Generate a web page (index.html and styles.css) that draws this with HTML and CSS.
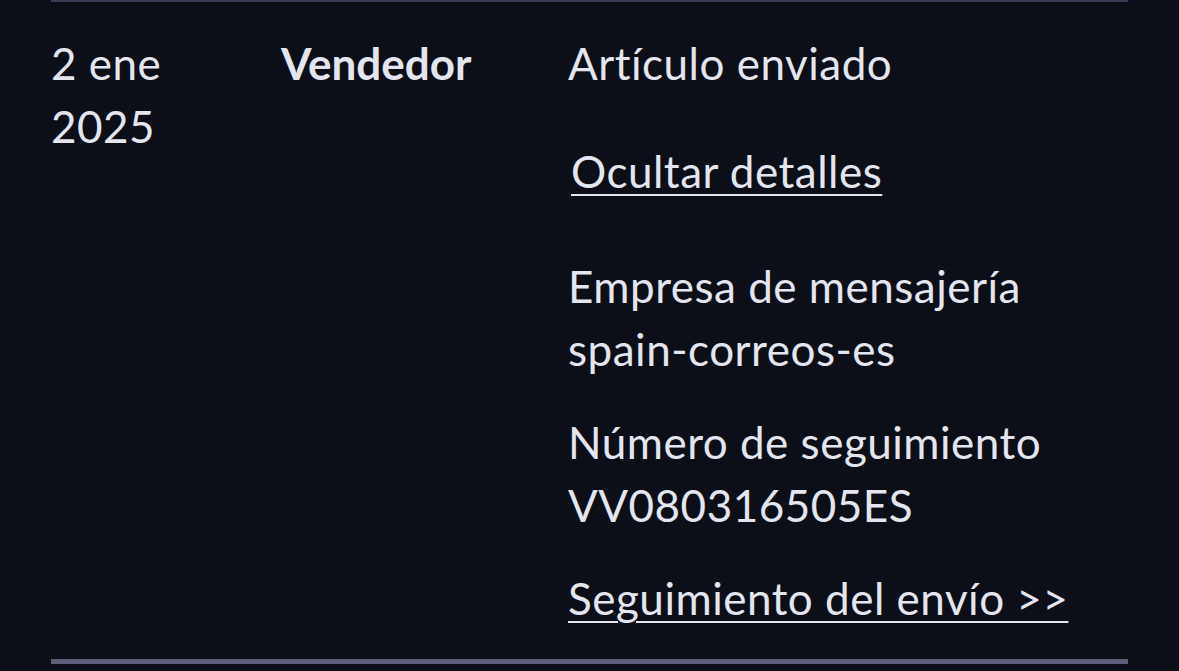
FILE: index.html
```html
<!DOCTYPE html>
<html>
<head>
	<title>Historial del pedido</title>
	<link rel="stylesheet" href="styles.css">
</head>
<body>
	<div class="history">
		<div class="entry">
			<div class="date">2 ene<br>2025</div>
			<div class="actor">Vendedor</div>
			<div class="details">
				<p class="status">Artículo enviado</p>
				<a class="toggle" href="#">Ocultar detalles</a>
				<div class="info">
					<p>Empresa de mensajería<br>spain-correos-es</p>
					<p>Número de seguimiento<br>VV080316505ES</p>
					<a class="track" href="#">Seguimiento del envío &gt;&gt;</a>
				</div>
			</div>
		</div>
	</div>
</body>
</html>
```

FILE: styles.css
```css
body {
	margin: 0;
	padding: 0;
	background-color: #0c0f18;
	color: #e4e6ef;
	font-family: Lato, "Noto Sans", sans-serif;
	font-size: 44px;
	line-height: 63px;
	letter-spacing: 0.5px;
}
.history {
	margin: 0 51px;
	border-top: 2px solid #3a3d55;
	border-bottom: 5px solid #5c5f7a;
}
.entry {
	display: grid;
	grid-template-columns: 230px 287px 1fr;
	padding: 30px 0 29px;
}
.actor {
	font-weight: bold;
	letter-spacing: 0;
}
.details p {
	margin: 0;
}
.details a {
	color: #e4e6ef;
	text-decoration: underline;
	text-underline-offset: 6px;
	text-decoration-thickness: 2px;
}
.toggle {
	display: inline-block;
	margin: 45px 0 0 3px;
}
.info {
	display: flex;
	flex-direction: column;
	gap: 30px;
	margin-top: 52px;
}
.info a {
	align-self: flex-start;
}
```
